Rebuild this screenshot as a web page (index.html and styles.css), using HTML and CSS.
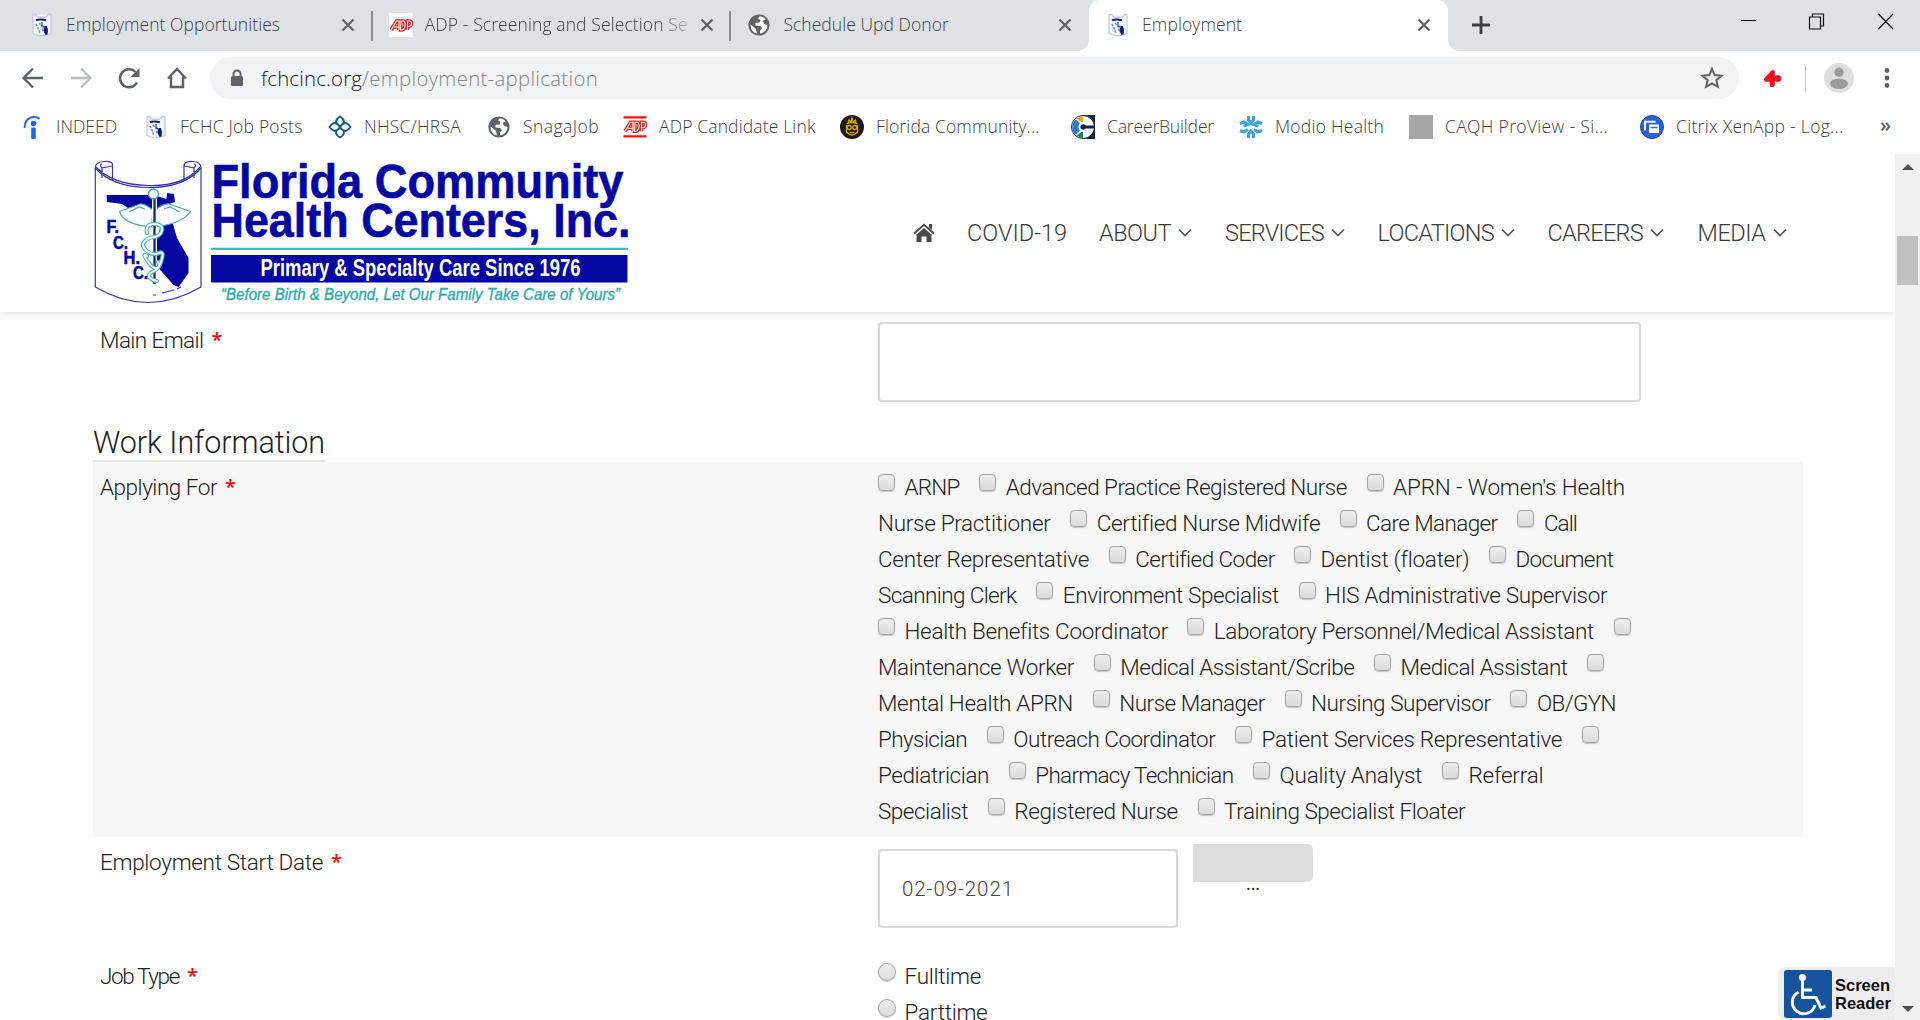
FILE: index.html
```html
<!DOCTYPE html>
<html lang="en">
<head>
<meta charset="utf-8">
<title>Employment</title>
<link rel="stylesheet" href="styles.css">
</head>
<body>
<svg class="defs" width="0" height="0" aria-hidden="true">
  <symbol id="close" viewBox="0 0 14 14"><path d="M1.500 1.500l11 11M12.500 1.500l-11 11" stroke="#5f6368" stroke-width="2.300" fill="none"/></symbol>
  <symbol id="fchc" viewBox="0 0 24 24">
    <path d="M3 1.500h3q0 3 6 3 6 0 6-3h3M3 1.500v19q9 4.500 18 0v-19" fill="#f4f5fd" stroke="#c3c8ea" stroke-width="1.300"/>
    <path d="M6 7.200q4-1.500 10 0" stroke="#1c1f70" stroke-width="2" fill="none"/><path d="M6 11l2 4 2 5M9 10l3 3 1 6" stroke="#6f93b5" stroke-width="1.500" stroke-dasharray="2.500 1" fill="none"/>
    <path d="M14 13l3 0 1 4-.5 4.500-2 .5-2-4z" fill="#10158a"/><path d="M12 9v4l3 1" stroke="#2b6a94" stroke-width="1.400" fill="none"/>
  </symbol>
  <symbol id="globe" viewBox="0 0 24 24">
    <circle cx="12" cy="12" r="10.600" fill="#5f6368"/>
    <path d="M12.500 3.500l-1.500 2 2.500 1.500-1 2.500-4 .5v2.500l5 .5 1.500 2.500-2 2v3c4-.5 7.500-4 7.500-8.500l-3-1-2-3 3-1.500C17.500 4.500 15 3.300 12.500 3.500zM3.500 11.500l5.500 4.500 1 4.500C6 19.800 3.400 16 3.500 11.500z" fill="#fff"/>
  </symbol>
  <symbol id="adp" viewBox="0 0 24 24">
    <g fill="none" stroke-width="3.600" stroke="#e0201b"><path d="M2 17L7.500 8H10v9M5 14h5M12 8h2q2.500 0 2 4.500T12 17h-.5zM18.500 17V8h2q2 0 2 2.500T20 13.500h-2"/></g>
    <g fill="none" stroke-width="1.100" stroke="#fff"><path d="M2 17L7.500 8H10v9M5 14h5M12 8h2q2.500 0 2 4.500T12 17h-.5zM18.500 17V8h2q2 0 2 2.500T20 13.500h-2"/></g>
  </symbol>
  <symbol id="chev" viewBox="0 0 14 9"><path d="M1 1.500l6 6 6-6" stroke="#555" stroke-width="1.700" fill="none"/></symbol>
</svg>

<div class="tabs">
  <div class="tab"><svg class="ico"><use href="#fchc"/></svg><span class="tt"><span data-w="214">Employment Opportunities</span></span><svg class="x"><use href="#close"/></svg></div>
  <div class="tab divided"><svg class="ico white"><use href="#adp"/></svg><span class="tt fade"><span data-w="263">ADP - Screening and Selection Se</span></span><svg class="x"><use href="#close"/></svg></div>
  <div class="tab divided"><svg class="ico"><use href="#globe"/></svg><span class="tt"><span data-w="165.500">Schedule Upd Donor</span></span><svg class="x"><use href="#close"/></svg></div>
  <div class="tab active"><svg class="ico"><use href="#fchc"/></svg><span class="tt"><span data-w="100">Employment</span></span><svg class="x"><use href="#close"/></svg></div>
  <svg class="plus" viewBox="0 0 18 18"><path d="M9 0v18M0 9h18" stroke="#3c4043" stroke-width="2.800"/></svg>
  <svg class="wincontrols" viewBox="0 0 154 18" fill="none" stroke="#111" stroke-width="1.200"><path d="M1 8.500h15M69.500 5h11v12h-11zM72.500 5V2h11v12h-3M138.500 2l14.500 15M153 2l-14.500 15"/></svg>
</div>

<div class="toolbar">
  <div class="navicons">
    <svg viewBox="0 0 24 24"><path d="M22 12H3M12 2.500L2.500 12l9.500 9.500" stroke="#5f6368" stroke-width="2.400" fill="none"/></svg>
    <svg viewBox="0 0 24 24"><path d="M2 12h19M12 2.500l9.500 9.500-9.500 9.500" stroke="#babcbe" stroke-width="2.400" fill="none"/></svg>
    <svg viewBox="0 0 24 24"><path d="M20 16.500A9 9 0 1 1 18.500 6" stroke="#5f6368" stroke-width="2.500" fill="none"/><path d="M22.500 2v9h-9z" fill="#5f6368"/></svg>
    <svg viewBox="0 0 24 24"><path d="M3 12.500L12 3l9 9.500M6 10.500V21h12V10.500" stroke="#5f6368" stroke-width="2.500" fill="none"/></svg>
  </div>
  <div class="omnibox">
    <svg class="lock" viewBox="0 0 14 18"><path d="M3.500 8V5a3.500 3.500 0 0 1 7 0v3" fill="none" stroke="#5f6368" stroke-width="2"/><rect x="1" y="7" width="12" height="10" rx="1.500" fill="#5f6368"/></svg>
    <span class="host" data-w="101">fchcinc.org</span><span class="path" data-w="236">/employment-application</span>
    <svg class="star" viewBox="0 0 24 24"><path d="M12 2.800l2.700 6.300 6.800.6-5.200 4.500 1.600 6.600-5.900-3.500-5.900 3.500 1.600-6.600-5.200-4.500 6.800-.6z" fill="none" stroke="#5f6368" stroke-width="2"/></svg>
  </div>
  <svg class="ext" viewBox="0 0 20 20"><path d="M9 1.500Q12 0 12.500 3v13q-.5 3-3 3T7 16v-2.500H3Q0 13 1.500 9.500z" fill="#f70d1a"/><rect x="12" y="6.500" width="7.200" height="7" rx="3" fill="#f70d1a"/></svg>
  <i class="sep"></i>
  <svg class="avatar" viewBox="0 0 30 30"><circle cx="15" cy="15" r="15" fill="#dedede"/><circle cx="15" cy="9.200" r="4.700" fill="#9b9b9b"/><ellipse cx="15" cy="20.800" rx="9" ry="5.200" fill="#9b9b9b"/></svg>
  <svg class="dots" viewBox="0 0 6 20" fill="#5f6368"><circle cx="3" cy="2.500" r="2.400"/><circle cx="3" cy="10" r="2.400"/><circle cx="3" cy="17.500" r="2.400"/></svg>
</div>

<div class="bookmarks">
  <div class="bm"><svg viewBox="0 0 24 24"><path d="M4.500 13Q5 3 13 2q4-.5 6.500 2" stroke="#2164f3" stroke-width="1.800" fill="none"/><circle cx="13.500" cy="8.500" r="2.700" fill="#2164f3"/><rect x="11.200" y="12.500" width="4.600" height="11.500" rx="1.500" fill="#2164f3"/></svg><span data-w="61">INDEED</span></div>
  <div class="bm"><svg><use href="#fchc"/></svg><span data-w="122.500">FCHC Job Posts</span></div>
  <div class="bm"><svg viewBox="0 0 24 24" fill="none" stroke="#0b5c8a" stroke-width="1.800"><path d="M12 1.500q4 2.500 4 5T12 11Q8 9 8 6.500T12 1.500zM12 13q4 2 4 4.500t-4 5q-4-2.500-4-5T12 13zM1.500 12q3-4 5.500-4t5 4q-2.500 4-5 4t-5.500-4zM12 12q2.500-4 5-4t5.500 4q-3 4-5.500 4t-5-4z"/></svg><span data-w="97">NHSC/HRSA</span></div>
  <div class="bm"><svg><use href="#globe"/></svg><span data-w="76">SnagaJob</span></div>
  <div class="bm"><svg viewBox="0 0 24 24"><path d="M.5 2.300h23M.5 21.300h23" stroke="#fb1010" stroke-width="2.200"/><use href="#adp" y="-.7" width="24" height="24"/></svg><span data-w="156.500">ADP Candidate Link</span></div>
  <div class="bm"><svg viewBox="0 0 24 24"><circle cx="12" cy="12" r="12" fill="#1e1b17"/><g fill="none" stroke="#d9a41c" stroke-width="1.300"><path d="M6.500 10V17q5.500 6 11 0V10M6.500 9q5.500-3 11 0M8 8l1-3 2 2 1-4 1.500 4L15.500 5l.5 3"/><circle cx="9.300" cy="12.500" r="2"/><circle cx="14.700" cy="12.500" r="2"/><path d="M9.500 17.500h5"/></g></svg><span data-w="163.500">Florida Community...</span></div>
  <div class="bm"><svg viewBox="0 0 24 24"><path d="M12 0h12v24H12z" fill="#14254a"/><circle cx="12" cy="12" r="11.500" fill="#fff" stroke="#14254a" stroke-width="1"/><path d="M12 12L5 4A10.500 10.500 0 0 0 5 20z" fill="#2b7fc0"/><path d="M12 8L5.500 3.500Q9 .8 12 1z" fill="#f79d1c"/><path d="M12 16l-6.500 4.500Q9 23 12 23z" fill="#128a5b"/><circle cx="12.500" cy="12" r="5" fill="#fff"/><path d="M24 10.500H14.500a2.800 2.800 0 1 0 0 3H24z" fill="#14254a"/></svg><span data-w="107">CareerBuilder</span></div>
  <div class="bm"><svg viewBox="0 0 24 24" stroke="#3aa5d4" stroke-width="3" fill="none"><path d="M9.500 1v4l2.500 3 2.500-3V1M9.500 23v-4l2.500-3 2.500 3v4M1 8.500l4-1.500 4 2.500-4.500 1.500M1 15.500L5 17l4-2.500M23 8.500L19 7l-4 2.500 4.500 1.500M23 15.500L19 17l-4-2.500"/></svg><span data-w="109">Modio Health</span></div>
  <div class="bm"><svg viewBox="0 0 24 24"><path d="M0 0h24v24H0z" fill="#a6a6a6"/></svg><span data-w="163">CAQH ProView - Si...</span></div>
  <div class="bm"><svg viewBox="0 0 24 24"><circle cx="12" cy="12" r="11.500" fill="#2663d8" stroke="#2343a8"/><path d="M5 15.500V6.800h10.500" stroke="#fff" stroke-width="2" fill="none"/><path d="M9 9.500h10v8.500H9z" fill="#fff"/><path d="M10.500 12.500h7" stroke="#2663d8" stroke-width="1.400"/></svg><span data-w="167.500">Citrix XenApp - Log...</span></div>
  <span class="more">»</span>
</div>

<div class="view">
  <main class="page">
    <header class="site">
      <svg class="logo" viewBox="93 156 540 152">
        <g fill="none" stroke="#3437a6" stroke-width="1.200">
          <path d="M95.300 168V287Q148 318 201 287V168"/>
          <path d="M95.300 168Q95 162 104 161.500T112.500 165V181M95.300 168Q112 187 148 187.500T201 168M201 168Q201 162 193 161.500T184 165V181"/>
          <path d="M96 167Q112 184.500 148 185.500T200 167M112 166l-10 2V178M102 168q-3-3 0-4M184 166l10 2V178M194 168q3-3 0-4"/>
        </g>
        <path d="M106.500 195h47l13 4 .5-6 7 1 1 8-9 3-11 8-12-7-15 2-6-4-15-2zM161 224l12 0 4 14 11.500 20v15l-10 14-5-2-7-8-8-9-4-18z" fill="#0508a0"/>
        <g fill="#fff" stroke="#4da5ab" stroke-width="1.200"><path d="M153 210q-9-7-13-6l-20.500 7.500q4 13 32 15.500zM155 210q9-7 14-6l21.500 7.500q-8 12-36 15.500z"/><path d="M129 212l10-5 6 2M180 212l-10-5-6 2" fill="none"/></g>
        <path d="M154.500 198V284" stroke="#fff" stroke-width="5"/>
        <path d="M154.500 198V284" stroke="#24288f" stroke-width="2.400"/>
        <circle cx="153.500" cy="194" r="5" fill="#eef8f7" stroke="#4c9ba4" stroke-width="1.300"/>
        <g fill="none" stroke-linecap="round"><path id="s" d="M147 233q-2-9 7-9t8 6-8 7-10 5 3 9 12 2 2 9-12 1-2-7M158 262q4 5-4 9t-4 7 7 3" stroke="#52b4b6" stroke-width="4.200"/><path d="M147 233q-2-9 7-9t8 6-8 7-10 5 3 9 12 2 2 9-12 1-2-7M158 262q4 5-4 9t-4 7 7 3" stroke="#f3fbfb" stroke-width="1.900"/></g>
        <path d="M162 293l12-3M177 289l4-2M153 295h3" stroke="#2c2fa0" stroke-width="1.200"/>
        <g fill="#0508a0" stroke="#0508a0" stroke-width=".5" font-family="Liberation Sans, sans-serif" font-weight="700" font-size="17.500"><text x="106.500" y="233" textLength="12.500" lengthAdjust="spacingAndGlyphs">F.</text><text x="113" y="248.500" textLength="15" lengthAdjust="spacingAndGlyphs">C.</text><text x="123.500" y="263.500" textLength="16.500" lengthAdjust="spacingAndGlyphs">H.</text><text x="133" y="279" textLength="15" lengthAdjust="spacingAndGlyphs">C.</text></g>
        <g fill="#0508a0" stroke="#0508a0" stroke-width=".6" font-family="Liberation Sans, sans-serif" font-weight="700" font-size="48">
          <text x="211.500" y="197.500" textLength="412" lengthAdjust="spacingAndGlyphs">Florida Community</text>
          <text x="211.500" y="237" textLength="419" lengthAdjust="spacingAndGlyphs">Health Centers, Inc.</text>
        </g>
        <path d="M211 248.800h417" stroke="#49b6b5" stroke-width="2.200"/>
        <path d="M211 255h416.500v27.500H211z" fill="#0508a0"/>
        <text x="260.500" y="275.600" textLength="320" lengthAdjust="spacingAndGlyphs" fill="#fff" font-family="Liberation Sans, sans-serif" font-weight="700" font-size="24">Primary &amp; Specialty Care Since 1976</text>
        <text x="221" y="300.400" textLength="399" lengthAdjust="spacingAndGlyphs" fill="#2fa9a8" stroke="#2fa9a8" stroke-width=".35" font-family="Liberation Sans, sans-serif" font-style="italic" font-size="16.500">“Before Birth &amp; Beyond, Let Our Family Take Care of Yours”</text>
      </svg>
      <nav class="menu">
        <a><svg class="home" viewBox="0 0 22 19"><path d="M11 5l7.500 6.500V19h-5v-5.500h-5V19h-5v-7.500z" fill="#4a4a4a"/><path d="M1 10.500L11 1.800l10 8.700" fill="none" stroke="#4a4a4a" stroke-width="1.900"/><path d="M16 1h3v6l-3-2.600z" fill="#4a4a4a"/></svg></a>
        <a><span data-w="100">COVID-19</span></a>
        <a><span data-w="72">ABOUT</span><svg class="chev"><use href="#chev"/></svg></a>
        <a><span data-w="99">SERVICES</span><svg class="chev"><use href="#chev"/></svg></a>
        <a><span data-w="116.500">LOCATIONS</span><svg class="chev"><use href="#chev"/></svg></a>
        <a><span data-w="95.500">CAREERS</span><svg class="chev"><use href="#chev"/></svg></a>
        <a><span data-w="68">MEDIA</span><svg class="chev"><use href="#chev"/></svg></a>
      </nav>
    </header>

    <form class="form">
      <div class="row email">
        <div class="label"><span data-w="103.500">Main Email</span><b>*</b></div>
        <input class="field wide" type="text">
      </div>
      <h2><span data-w="232">Work Information</span></h2>
      <div class="row applying">
        <div class="label"><span data-w="117">Applying For</span><b>*</b></div>
        <div class="options">
          <div><input type="checkbox"><span data-w="55">ARNP</span><input type="checkbox"><span data-w="341">Advanced Practice Registered Nurse</span><input type="checkbox"><span data-w="232">APRN - Women's Health</span></div>
          <div><span data-w="172.500">Nurse Practitioner</span><input type="checkbox"><span data-w="223">Certified Nurse Midwife</span><input type="checkbox"><span data-w="131.500">Care Manager</span><input type="checkbox"><span data-w="33">Call</span></div>
          <div><span data-w="211">Center Representative</span><input type="checkbox"><span data-w="139">Certified Coder</span><input type="checkbox"><span data-w="148.500">Dentist (floater)</span><input type="checkbox"><span data-w="98">Document</span></div>
          <div><span data-w="138.500">Scanning Clerk</span><input type="checkbox"><span data-w="216">Environment Specialist</span><input type="checkbox"><span data-w="282">HIS Administrative Supervisor</span></div>
          <div><input type="checkbox"><span data-w="263">Health Benefits Coordinator</span><input type="checkbox"><span data-w="380">Laboratory Personnel/Medical Assistant</span><input type="checkbox"></div>
          <div><span data-w="196">Maintenance Worker</span><input type="checkbox"><span data-w="234">Medical Assistant/Scribe</span><input type="checkbox"><span data-w="167">Medical Assistant</span><input type="checkbox"></div>
          <div><span data-w="195">Mental Health APRN</span><input type="checkbox"><span data-w="145.500">Nurse Manager</span><input type="checkbox"><span data-w="179.500">Nursing Supervisor</span><input type="checkbox"><span data-w="79">OB/GYN</span></div>
          <div><span data-w="89">Physician</span><input type="checkbox"><span data-w="202">Outreach Coordinator</span><input type="checkbox"><span data-w="300.500">Patient Services Representative</span><input type="checkbox"></div>
          <div><span data-w="111">Pediatrician</span><input type="checkbox"><span data-w="198">Pharmacy Technician</span><input type="checkbox"><span data-w="142.500">Quality Analyst</span><input type="checkbox"><span data-w="75">Referral</span></div>
          <div><span data-w="90">Specialist</span><input type="checkbox"><span data-w="163.500">Registered Nurse</span><input type="checkbox"><span data-w="241">Training Specialist Floater</span></div>
        </div>
      </div>
      <div class="row start">
        <div class="label"><span data-w="223">Employment Start Date</span><b>*</b></div>
        <div class="field date"><span data-w="112">02-09-2021</span></div>
        <div class="pick"><i></i><span>...</span></div>
      </div>
      <div class="row job">
        <div class="label"><span data-w="79">Job Type</span><b>*</b></div>
        <div class="options">
          <div><input type="radio" name="job"><span data-w="76.500">Fulltime</span></div>
          <div><input type="radio" name="job"><span data-w="83">Parttime</span></div>
        </div>
      </div>
    </form>

    <div class="reader">
      <svg viewBox="0 0 48 48"><rect width="48" height="48" rx="3" fill="#15539c"/><g fill="none" stroke="#fff" stroke-width="3"><path d="M18.500 10v17.500h13.500l5 10.500 4.500-2M18.500 20h9.500"/><path d="M14.500 22a11.500 11.500 0 1 0 16.500 13"/></g><circle cx="18.500" cy="7.500" r="3.600" fill="#fff"/></svg>
      <strong>Screen<br>Reader</strong>
    </div>
  </main>
  <aside class="scroll"><i class="up"></i><i class="thumb"></i><i class="down"></i></aside>
</div>
<script src="tracking.js"></script>
</body>
</html>
```
FILE: styles.css
```css
* { box-sizing: border-box; }
body { margin: 0; width: 1920px; height: 1020px; overflow: hidden; display: flex; flex-direction: column; background: #fff; font-family: "Open Sans", "Noto Sans", sans-serif; font-weight: 360; color: #3c4043; }
.defs { position: absolute; }
svg { flex: none; display: block; }
span { white-space: nowrap; }

/* browser tabs */
.tabs { height: 51px; flex: none; background: #dee1e6; display: flex; align-items: center; padding-left: 13px; }
.tab { width: 358.7px; height: 51px; display: flex; align-items: center; padding-left: 17px; position: relative; font-size: 17.500px; padding-bottom: 1px; }
.tab.divided::before { content: ""; position: absolute; left: -1px; top: 11px; width: 2px; height: 30px; background: #8b8e92; }
.ico { width: 24px; height: 24px; }
.ico.white { background: #fff; }
.tt { width: 269px; margin-left: 12px; padding-bottom: 2px; display: flex; }
.tt.fade { width: 266px; margin-right: 3px; -webkit-mask-image: linear-gradient(90deg, #000 88%, rgba(0,0,0,.2)); mask-image: linear-gradient(90deg, #000 88%, rgba(0,0,0,.2)); }
.x { width: 14px; height: 14px; margin-left: 6px; }
.tab.active { background: #fff; border-radius: 11px 11px 0 0; }
.tab.active::before, .tab.active::after { content: ""; position: absolute; bottom: 0; width: 11px; height: 11px; }
.tab.active::before { left: -11px; background: radial-gradient(circle at 0 0, transparent 10.500px, #fff 11px); }
.tab.active::after { right: -11px; background: radial-gradient(circle at 100% 0, transparent 10.500px, #fff 11px); }
.plus { width: 18px; height: 18px; margin: 0 0 1px 24px; }
.wincontrols { width: 154px; height: 18px; margin: 0 26px 9px auto; }

/* address bar */
.toolbar { height: 54px; flex: none; display: flex; align-items: center; padding-left: 21px; }
.navicons { display: flex; gap: 24px; width: 189px; }
.navicons svg { width: 24px; height: 24px; }
.omnibox { width: 1529px; height: 42px; border-radius: 21px; background: #f1f3f4; display: flex; align-items: center; padding: 0 15px 0 20px; font-size: 20.400px; }
.lock { width: 14px; height: 18px; margin-right: 17px; }
.host { color: #202124; }
.path { color: #80868b; }
.star { width: 24px; height: 24px; margin-left: auto; }
.ext { width: 19px; height: 19px; margin-left: 24px; }
.sep { width: 1px; height: 25px; background: #c8cacd; margin-left: 23px; }
.avatar { width: 30px; height: 30px; margin-left: 18px; }
.dots { width: 6px; height: 20px; margin-left: 30px; }

/* bookmarks */
.bookmarks { height: 49px; flex: none; display: grid; grid-template-columns: 124px 184px 159px 136px 217px 231px 168px 170px 231px 240px auto; padding: 0 0 6px 20px; align-items: center; font-size: 17.500px; }
.bm { display: flex; align-items: center; }
.bm svg { width: 24px; height: 24px; margin-right: 12px; }
.bm span { padding-bottom: 2px; }
.more { font-size: 20px; font-weight: 600; line-height: 24px; padding-bottom: 4px; color: #5f6368; }

/* page viewport */
.view { height: 866px; flex: none; display: flex; }
.page { width: 1895px; height: 866px; overflow: hidden; position: relative; font-family: Roboto, "Open Sans", sans-serif; font-weight: 300; font-size: 22.500px; color: #222; }
.site { height: 158px; display: flex; padding-left: 93px; background: #fff; box-shadow: 0 0 10px rgba(0,0,0,.16); position: relative; }
.logo { width: 540px; height: 152px; margin-top: 2px; }
.menu { margin-left: 279.500px; height: 157px; display: grid; grid-template-columns: 54.500px 132px 126px 152.500px 170px 150px auto; align-items: center; font-size: 23.500px; color: #3a3a3a; }
.menu a { display: flex; align-items: center; line-height: 30px; }
.home { width: 22px; height: 19px; }
.chev { width: 14px; height: 9px; margin-left: 7px; }

/* application form */
.form { margin: 0 92px 0 93px; }
.row { display: flex; }
.label { width: 785px; padding-left: 7px; flex: none; line-height: 36px; display: flex; }
.label b { color: #f00; font: 600 20px/35px "Open Sans", sans-serif; margin-left: 8px; }
.field { border: 2px solid #d9d9d9; border-radius: 4px; background: #fff; padding: 0 22px; }
.email { padding-top: 10px; height: 107px; }
.wide { width: 763px; height: 80px; }
h2 { margin: 0; padding-top: 4px; font-weight: 300; font-size: 30.500px; line-height: 39px; height: 43px; width: 232px; border-bottom: 2px solid #e3e3e3; }
h2 span { display: block; }
.applying { background: #f7f7f7; padding: 7px 0 8px; }
.options > div { display: flex; height: 36px; line-height: 36px; }
.options input { appearance: none; margin: 5px 9.500px 0 0; width: 17px; height: 17px; border: 1px solid #a6a6a6; border-radius: 4px; background: linear-gradient(#ececec, #dcdcdc); box-shadow: 0 1px 1px rgba(0,0,0,.2); flex: none; }
.options span + input { margin-left: 19.800px; }
.options input[type=radio] { width: 18px; height: 18px; border-radius: 50%; margin-right: 8.500px; }
.start { height: 121px; padding-top: 7px; }
.date { width: 300px; height: 79px; line-height: 76px; font-size: 20.500px; color: #444; margin-top: 5px; }
.pick { width: 120px; margin-left: 15px; display: flex; flex-direction: column; align-items: center; font: 400 18px/2px "Open Sans", sans-serif; }
.pick i { width: 120px; height: 38px; background: #ddd; border-radius: 0 6px 6px 0; }

/* screen reader badge */
.reader { position: absolute; right: 0; bottom: 0; width: 117px; height: 53px; background: #ededed; border-radius: 8px 0 0 8px; display: flex; padding: 3px 0 0 6px; gap: 3px; }
.reader svg { width: 48px; height: 48px; }
.reader strong { font: 700 16.500px/18px "Liberation Sans", sans-serif; color: #111; padding-top: 6px; }

/* scrollbar */
.scroll { width: 25px; background: #f1f1f1; display: flex; flex-direction: column; align-items: center; }
.scroll i { display: block; }
.thumb { width: 21px; height: 49px; background: #c1c1c1; margin-top: 66px; }
.up, .down { border: 6px solid transparent; }
.up { border-top: 0; border-bottom-color: #505050; margin-top: 10px; }
.down { border-bottom: 0; border-top-color: #505050; margin: auto 0 8px; }
```
FILE: tracking.js
```
// Track each label so that it fills the width set in its data-w attribute.
document.querySelectorAll('[data-w]').forEach(function (el) {
  var width = parseFloat(el.dataset.w);
  el.style.display = 'inline-block';
  el.style.flex = 'none';
  el.style.width = 'max-content';
  var natural = el.getBoundingClientRect().width;
  el.style.letterSpacing = (width - natural) / el.textContent.length + 'px';
  el.style.width = width + 'px';
});
```
